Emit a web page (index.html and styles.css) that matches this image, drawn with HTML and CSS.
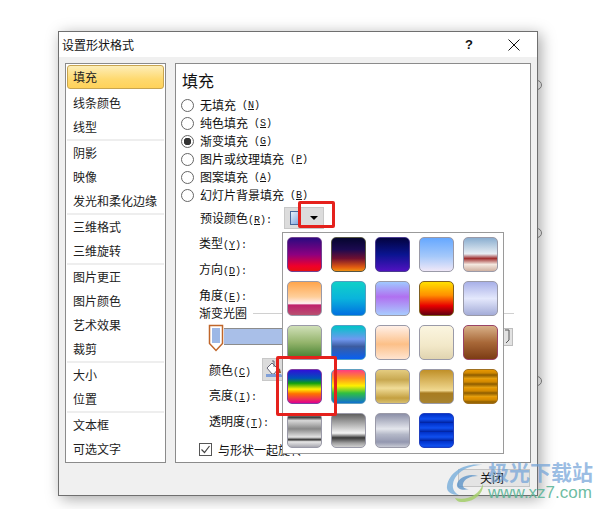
FILE: index.html
```html
<!DOCTYPE html>
<html lang="zh-CN">

<head>
    <meta charset="UTF-8">
    <title>设置形状格式</title>
    <link rel="stylesheet" href="styles.css">
</head>

<body>
    <span class="ring ring-a"></span>
    <span class="ring ring-b"></span>
    <span class="ring ring-c"></span>

    <div class="dialog">
        <div class="titlebar">
            <span class="title">设置形状格式</span>
            <span class="help">?</span>
            <svg class="close" width="12" height="12" viewBox="0 0 12 12">
                <path d="M.5.5l11 11M11.5.5l-11 11" stroke="#111" fill="none" />
            </svg>
        </div>

        <div class="client">
            <ul class="nav">
                <li class="on">填充</li>
                <li>线条颜色</li>
                <li class="last">线型</li>
                <li>阴影</li>
                <li>映像</li>
                <li class="last">发光和柔化边缘</li>
                <li>三维格式</li>
                <li class="last">三维旋转</li>
                <li>图片更正</li>
                <li>图片颜色</li>
                <li>艺术效果</li>
                <li class="last">裁剪</li>
                <li>大小</li>
                <li class="last">位置</li>
                <li>文本框</li>
                <li>可选文字</li>
            </ul>

            <div class="panel">
                <h2>填充</h2>
                <div class="radio"><i></i>无填充<span class="key">(<u>N</u>)</span></div>
                <div class="radio"><i></i>纯色填充<span class="key">(<u>S</u>)</span></div>
                <div class="radio checked"><i></i>渐变填充<span class="key">(<u>G</u>)</span></div>
                <div class="radio"><i></i>图片或纹理填充<span class="key">(<u>P</u>)</span></div>
                <div class="radio"><i></i>图案填充<span class="key">(<u>A</u>)</span></div>
                <div class="radio"><i></i>幻灯片背景填充<span class="key">(<u>B</u>)</span></div>

                <div class="row preset">
                    <span class="label">预设颜色<span class="key">(<u>R</u>):</span></span>
                    <div class="drop">
                        <span class="chip"></span>
                        <span class="arrow"></span>
                    </div>
                </div>
                <div class="row">类型<span class="key">(<u>Y</u>):</span></div>
                <div class="row">方向<span class="key">(<u>D</u>):</span></div>
                <div class="row short">角度<span class="key">(<u>E</u>):</span></div>
                <div class="stops-head"><span>渐变光圈</span><b></b></div>
                <div class="stops">
                    <svg class="stop" width="16" height="28" viewBox="0 0 16 28">
                        <path d="M1.500 1.500h13v18l-6.500 7-6.500-7z" fill="#fff" stroke="#c0662a" stroke-width="1.500" />
                        <rect x="4" y="4" width="8" height="15" fill="#9db8e6" />
                    </svg>
                    <div class="bar"></div>
                    <div class="stop-btn">
                        <svg width="8" height="15" viewBox="0 0 8 15">
                            <path d="M1 1h4v10l-3 3" stroke="#555" fill="none" />
                        </svg>
                    </div>
                </div>
                <div class="row sub color">
                    <span class="label">颜色<span class="key">(<u>C</u>)</span></span>
                    <div class="paint">
                        <svg width="22" height="21" viewBox="0 0 22 21">
                            <path d="M4 9l5-5 6 6-4 5-2 0z" fill="#fff" stroke="#667" />
                            <path d="M9 2l2 0 0 6" stroke="#667" fill="none" />
                            <path d="M15 9l2 1 1 4-3 0z" fill="#8a5a30" />
                            <path d="M3 15l15 0 2 3H3z" fill="#7f9fd8" />
                        </svg>
                    </div>
                </div>
                <div class="row sub">亮度<span class="key">(<u>I</u>):</span></div>
                <div class="row sub">透明度<span class="key">(<u>T</u>):</span></div>
                <div class="check">
                    <span class="box">
                        <svg width="11" height="11" viewBox="0 0 11 11">
                            <path d="M1.500 5.500l3 3 5-6.500" stroke="#444" stroke-width="1.200" fill="none" />
                        </svg>
                    </span>
                    与形状一起旋转<span class="key">(<u>W</u>)</span>
                </div>
            </div>
        </div>

        <div class="footer">
            <button class="btn">关闭</button>
        </div>

        <div class="popup">
            <span class="sw s1"></span>
            <span class="sw s2"></span>
            <span class="sw s3"></span>
            <span class="sw s4"></span>
            <span class="sw s5"></span>
            <span class="sw s6"></span>
            <span class="sw s7"></span>
            <span class="sw s8"></span>
            <span class="sw s9"></span>
            <span class="sw s10"></span>
            <span class="sw s11"></span>
            <span class="sw s12"></span>
            <span class="sw s13"></span>
            <span class="sw s14"></span>
            <span class="sw s15"></span>
            <span class="sw s16"></span>
            <span class="sw s17"></span>
            <span class="sw s18"></span>
            <span class="sw s19"></span>
            <span class="sw s20"></span>
            <span class="sw s21"></span>
            <span class="sw s22"></span>
            <span class="sw s23"></span>
            <span class="sw s24"></span>
        </div>
    </div>

    <div class="mark mark-top"></div>
    <div class="mark mark-bottom"></div>

    <div class="watermark">
        <svg class="swirl" width="50" height="40" viewBox="0 0 50 40">
            <path d="M2 24C4 10 20 0 38 3 24 3 10 10 8 22c-1 5 2 9 6 11C7 33 1 30 2 24z" fill="#7fb2dc" opacity=".85" />
            <path d="M12 22c2-7 12-11 21-8-8 0-14 3-15 8-1 3 2 5 6 5-6 2-13 0-12-5z" fill="#5c94c8" opacity=".8" />
            <path d="M10 36c12 3 24-3 28-14 1 10-10 19-22 18-3 0-5-2-6-4z" fill="#a5cf6b" opacity=".85" />
        </svg>
        <span class="wm-name">极光下载站</span>
        <span class="wm-url">www.xz7.com</span>
    </div>
</body>

</html>
```

FILE: styles.css
```css
* {
    margin: 0;
    padding: 0;
    box-sizing: border-box;
}

html,
body {
    height: 509px;
    overflow: hidden;
}

body {
    background-color: #fff;
    font: 12px "Noto Sans CJK SC", "Liberation Sans", sans-serif;
    color: #111;
    padding: 31px 0 0 58px;
    position: relative;
}

.ring {
    position: absolute;
    left: 532px;
    width: 10px;
    height: 10px;
    border: 1px solid #8a8a8a;
    border-radius: 50%;
}

.ring-a {
    top: 80px;
}

.ring-b {
    top: 228px;
}

.ring-c {
    top: 376px;
}

/* 窗口 */
.dialog {
    width: 480px;
    height: 465px;
    border: 1px solid #6f6f6f;
    background-color: #f0f0f0;
    box-shadow: 3px 3px 14px rgba(0, 0, 0, .35);
    position: relative;
    display: flex;
    flex-direction: column;
}

.titlebar {
    height: 25px;
    background-color: #fff;
    display: flex;
    align-items: center;
    padding: 0 17px 0 3px;
}

.title {
    flex: 1;
    line-height: 22px;
}

.help {
    font: bold 13px "Liberation Sans", sans-serif;
    margin-right: 35px;
}

.client {
    display: flex;
    gap: 9px;
    padding: 6px 5px 0 6px;
}

/* 左侧列表 */
.nav {
    width: 101px;
    height: 400px;
    background-color: #fff;
    border: 1px solid #8b8b8b;
    list-style: none;
    padding: 1px;
}

.nav li {
    height: 24px;
    line-height: 24px;
    padding-left: 6px;
    color: #222;
}

.nav li.last {
    height: 26px;
    border-bottom: 2px solid #eee;
}

.nav li.on {
    background: linear-gradient(#fdeeb8, #fed96f 60%, #ffd25a);
    border: 1px solid #c8a550;
    border-radius: 3px;
    line-height: 22px;
    padding-left: 5px;
    margin-bottom: 2px;
}

/* 右侧面板 */
.panel {
    width: 356px;
    height: 400px;
    background-color: #fff;
    border: 1px solid #8b8b8b;
    padding-left: 5px;
}

.panel h2 {
    height: 32px;
    line-height: 33px;
    font-size: 16px;
    font-weight: 400;
    padding-left: 1px;
}

.key {
    font: 10px "Liberation Mono", monospace;
}

.radio {
    height: 18px;
    line-height: 18px;
    display: flex;
    align-items: center;
    gap: 6px;
}

.radio i {
    width: 13px;
    height: 13px;
    border: 1px solid #666;
    border-radius: 50%;
    background-color: #fff;
    margin-right: 0;
}

.radio.checked i {
    background: radial-gradient(circle, #333 0 3.500px, #fff 4px);
}

.row {
    height: 26px;
    line-height: 24px;
    padding-left: 18px;
}

.row.short {
    height: 24px;
}

.row.sub {
    padding-left: 28px;
}

.preset {
    height: 22px;
    line-height: 22px;
    margin-top: 3px;
    margin-bottom: 2px;
    padding-left: 19px;
    display: flex;
}

.preset .label {
    width: 84px;
}

.drop {
    width: 40px;
    height: 22px;
    background-color: #dcdcdc;
    border: 1px solid #c8c8c8;
    display: flex;
    align-items: center;
    padding-left: 5px;
    gap: 6px;
}

.chip {
    width: 10px;
    height: 14px;
    background: linear-gradient(135deg, #e6f0fb, #7fa8e0);
    border: 1px solid #47689c;
}

.arrow {
    border: 4px solid transparent;
    border-top: 4px solid #000;
    border-bottom: 0;
    margin-left: 4px;
}

.stops-head {
    height: 12px;
    line-height: 12px;
    padding-left: 18px;
    display: flex;
    align-items: center;
    gap: 6px;
}

.stops-head b {
    flex: 1;
    border-top: 1px solid #d0d0d0;
    margin-right: 16px;
}

.stops {
    height: 28px;
    margin-top: 5px;
    padding-left: 27px;
    display: flex;
}

.stop {
    flex-shrink: 0;
}

.bar {
    width: 269px;
    height: 17px;
    margin-top: 4px;
    background-color: #a9bfe8;
    border: 1px solid #8c8c8c;
    border-left: 0;
}

.stop-btn {
    width: 20px;
    height: 18px;
    margin-top: 4px;
    background-color: #e2e2e2;
    border: 1px solid #bdbdbd;
    padding-left: 10px;
    line-height: 0;
}

.color {
    display: flex;
    height: 23px;
    line-height: 23px;
    margin-top: 6px;
    margin-bottom: 2px;
}

.color .label {
    width: 53px;
}

.paint {
    width: 24px;
    height: 23px;
    background-color: #dcdcdc;
    border: 1px solid #c8c8c8;
    line-height: 0;
}

.check {
    height: 14px;
    line-height: 14px;
    margin-top: 8px;
    padding-left: 18px;
    display: flex;
    gap: 6px;
}

.box {
    width: 13px;
    height: 13px;
    border: 1px solid #555;
    background-color: #fff;
    line-height: 0;
}

.footer {
    flex: 1;
    padding: 6px 7px 0 0;
    display: flex;
    justify-content: flex-end;
    align-items: flex-start;
}

.btn {
    width: 72px;
    height: 18px;
    background-color: #e4e4e4;
    border: 1px solid #c4c4c4;
    font: 12px "Noto Sans CJK SC", sans-serif;
    line-height: 14px;
    color: #111;
    padding-right: 4px;
}

/* 预设颜色弹出层 */
.popup {
    position: absolute;
    left: 223px;
    top: 200px;
    width: 222px;
    height: 222px;
    background-color: #fff;
    border: 1px solid #9a9a9a;
    padding: 4px;
    display: grid;
    grid-template-columns: repeat(5, 35px);
    grid-auto-rows: 35px;
    gap: 9px;
}

.sw {
    border-radius: 5px;
    border: 1px solid #9a9aa8;
}

.s1 { background: linear-gradient(#2c0a80, #8c0080 50%, #f0002a 85%, #e81010); border-color: #704090; }
.s2 { background: linear-gradient(#05052e, #1c0a50 35%, #701030 62%, #e05a10 88%, #f09010); border-color: #554; }
.s3 { background: linear-gradient(#030340, #0a1490 50%, #5012c0); border-color: #4a3a90; }
.s4 { background: linear-gradient(#66a8ff, #a4c8fa 55%, #f0e8f8); }
.s5 { background: linear-gradient(#8aaed0, #e8eef4 48%, #a03030 62%, #f4e8e0 80%, #d0b0a0); }
.s6 { background: linear-gradient(#ffa54c, #ffcf9a 45%, #ffeef0 65%, #c0206c 70%, #b85070); }
.s7 { background: linear-gradient(#10d0c8, #0ab4dc 50%, #0070e0); border-color: #50a0c0; }
.s8 { background: linear-gradient(#a0c8ff, #b070f0 45%, #a8ccff); }
.s9 { background: linear-gradient(#ffe000, #ff9000 40%, #e80000 72%, #600010); border-color: #806020; }
.s10 { background: linear-gradient(#a8b0e8, #e4e8fc 50%, #a4acd8); }
.s11 { background: linear-gradient(#d0e0b8, #94b46c 50%, #3e7c2c); }
.s12 { background: linear-gradient(#00c4c8, #7098f0 40%, #3c5ca0 62%, #0860f0); border-color: #50a0c8; }
.s13 { background: linear-gradient(#fff0e8, #fcc088 55%, #ffe4d0); }
.s14 { background: linear-gradient(#fbf5e0, #f2e8c8 60%, #e0d4b0); }
.s15 { background: linear-gradient(#d8b088, #a86838 50%, #7c3c14); border-color: #946; }
.s16 { background: linear-gradient(#3010d8, #0050b8 25%, #10a010 40%, #fff000 58%, #ff7000 72%, #e00090); border-color: #8040a0; }
.s17 { background: linear-gradient(#ff3c80, #ff9020 25%, #fff000 48%, #30c040 70%, #1070d0); border-color: #60a0c0; }
.s18 { background: linear-gradient(#e4cc80, #c8a850 30%, #f0dc98 55%, #c4a040 85%, #d8c070); }
.s19 { background: linear-gradient(#c09028, #f0d890 62%, #a87c20 70%, #a88430); }
.s20 { background: repeating-linear-gradient(#e89800 0, #d08800 3px, #8c5c00 5px, #f0a810 9px); border-color: #a07020; }
.s21 { background: linear-gradient(#d0d0d0, #383838 10%, #d8d8d8 20%, #888 45%, #e4e4e4 70%, #333 78%, #e8e8e8 84%, #a8a8b0); }
.s22 { background: linear-gradient(#606060, #909090 18%, #f4f4f4 58%, #383838 72%, #a0a0a0 88%, #d0d0d0); }
.s23 { background: linear-gradient(#8c90a8, #e4e6ec 45%, #b4b8c8 62%, #9498b0 85%, #c8cad4); }
.s24 { background: repeating-linear-gradient(#0030c8 0, #1050f0 5px, #00209c 9px); border-color: #2040c0; }

/* 红色标注框 */
.mark {
    position: absolute;
    border: 3px solid #e5211c;
    border-radius: 2px;
}

.mark-top {
    left: 298px;
    top: 201px;
    width: 37px;
    height: 27px;
}

.mark-bottom {
    left: 276px;
    top: 356px;
    width: 61px;
    height: 60px;
}

/* 水印 */
.watermark {
    position: absolute;
    left: 445px;
    top: 459px;
    width: 159px;
    height: 50px;
}

.swirl {
    position: absolute;
    left: 0;
    top: 3px;
}

.wm-name {
    position: absolute;
    left: 43px;
    top: 2px;
    font-size: 21px;
    line-height: 20px;
    font-weight: 700;
    color: rgba(110, 160, 215, .7);
    white-space: nowrap;
}

.wm-url {
    position: absolute;
    left: 43px;
    top: 25px;
    font: 400 17px/18px "Liberation Sans", sans-serif;
    color: rgba(90, 180, 150, .9);
    white-space: nowrap;
}
```
